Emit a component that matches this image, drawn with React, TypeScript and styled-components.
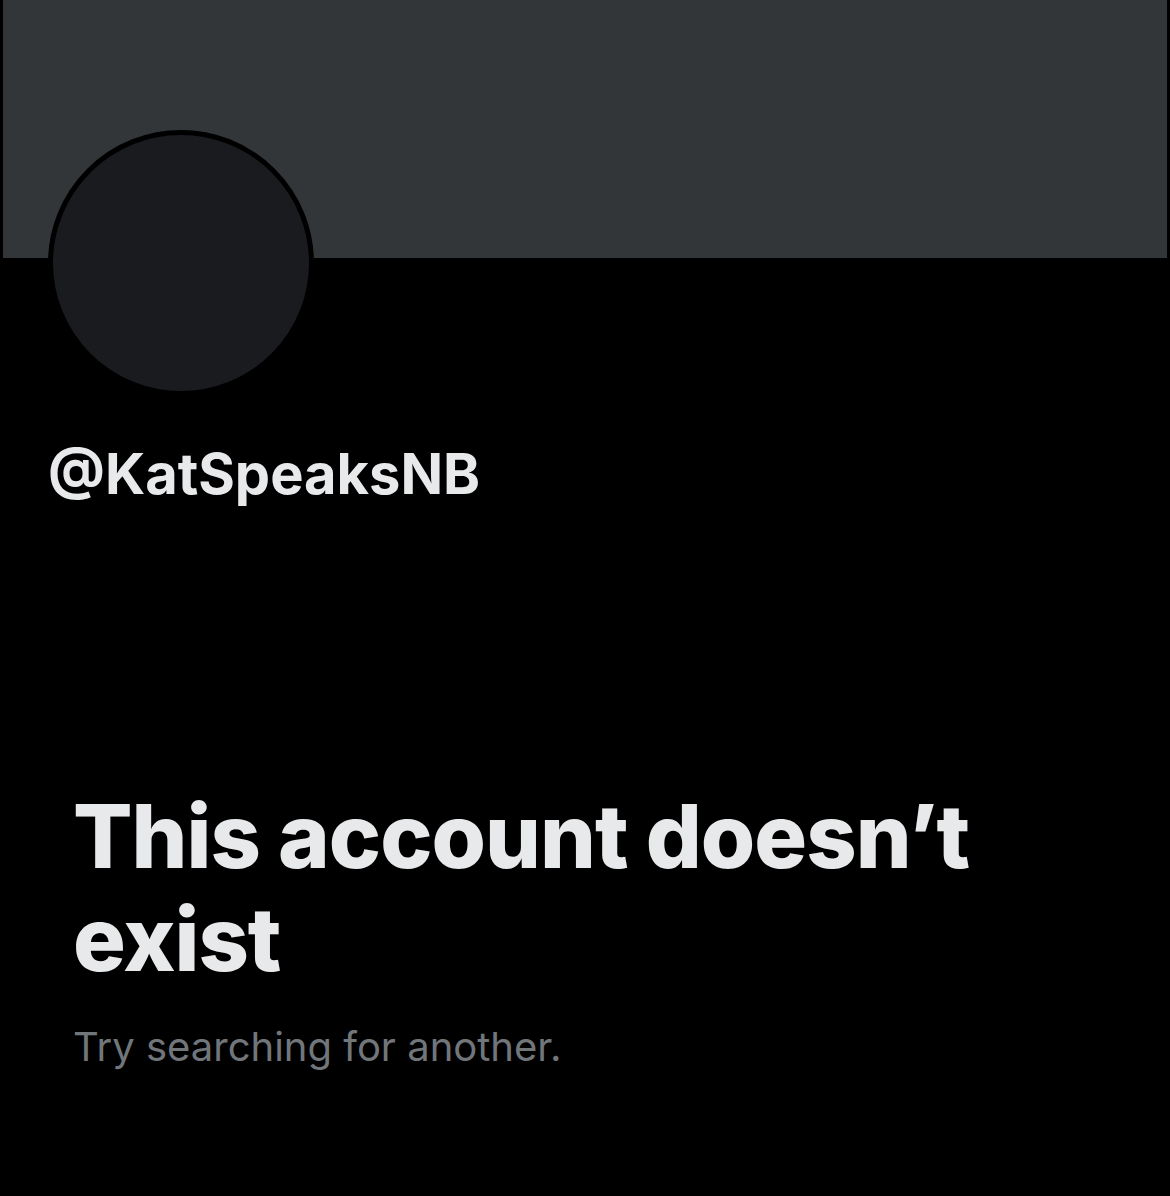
import React from "react";
import styled, { createGlobalStyle } from "styled-components";

const GlobalStyle = createGlobalStyle`
  html, body {
    margin: 0;
    padding: 0;
    background: #000;
  }
  body {
    font-family: Inter, "Noto Sans", "DejaVu Sans", sans-serif;
    color: #e7e9ea;
  }
`;

const Page = styled.div`
  width: 1170px;
  height: 1196px;
  background: #000;
  overflow: hidden;
`;

const Banner = styled.div`
  height: 258px;
  margin: 0 3px;
  background: #333639;
`;

const Avatar = styled.div`
  width: 256px;
  height: 256px;
  margin: -128px 0 0 48px;
  border: 5px solid #000;
  border-radius: 50%;
  background: #1a1b1e;
  position: relative;
`;

const Handle = styled.h2`
  margin: 46px 0 0 48px;
  font-size: 56px;
  font-weight: 700;
  line-height: 64px;
`;

const Message = styled.div`
  margin: 279px 0 0 73px;
  display: flex;
  flex-direction: column;
  gap: 32px;
`;

const Title = styled.h1`
  margin: 0;
  font-size: 88px;
  font-weight: 800;
  line-height: 103px;
  letter-spacing: -1px;
`;

const Subtitle = styled.p`
  margin: 0;
  font-size: 40px;
  font-weight: 400;
  color: #71767b;
  line-height: 48px;
`;

function App() {
  return (
    <Page>
      <GlobalStyle />
      <Banner />
      <Avatar />
      <Handle>@KatSpeaksNB</Handle>
      <Message>
        <Title>
          This account doesn’t
          <br />
          exist
        </Title>
        <Subtitle>Try searching for another.</Subtitle>
      </Message>
    </Page>
  );
}

export default App;
